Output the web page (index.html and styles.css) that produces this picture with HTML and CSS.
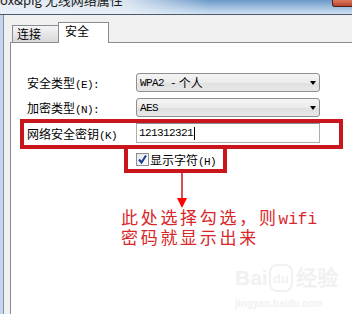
FILE: index.html
```html
<!DOCTYPE html>
<html lang="zh-CN">
<head>
    <meta charset="UTF-8">
    <meta name="viewport" content="width=device-width, initial-scale=1.0">
    <link rel="stylesheet" href="styles.css">
</head>
<body>
    <div class="window">
        <div class="titlebar">
            <span class="title">ox&amp;pig 无线网络属性</span>
            <span class="close"></span>
        </div>
        <div class="body">
            <div class="frame"></div>
            <div class="client">
                <div class="tabs">
                    <div class="tab">连接</div>
                    <div class="tab active">安全</div>
                </div>
                <div class="panel">
                    <div class="field">
                        <span class="label">安全类型<span class="en">(E):</span></span>
                        <div class="select"><span class="en">WPA2 - </span>&nbsp;个人<i class="drop"></i></div>
                    </div>
                    <div class="field">
                        <span class="label">加密类型<span class="en">(N):</span></span>
                        <div class="select"><span class="en">AES</span><i class="drop"></i></div>
                    </div>
                    <div class="field key">
                        <span class="label">网络安全密钥<span class="en">(K)</span></span>
                        <div class="input"><span class="en">121312321</span><i class="cursor"></i></div>
                    </div>
                    <div class="show">
                        <svg class="check" width="13" height="13" viewBox="0 0 13 13">
                            <defs>
                                <linearGradient id="box" x1="0" y1="0" x2="1" y2="1">
                                    <stop offset="0" stop-color="#dfe6ee"/>
                                    <stop offset="1" stop-color="#ffffff"/>
                                </linearGradient>
                            </defs>
                            <rect x="0.5" y="0.5" width="12" height="12" fill="url(#box)" stroke="#8e8f8f"/>
                            <path d="M3 6.5 L5.5 9.5 L10 2.5" fill="none" stroke="#1f3a8a" stroke-width="2"/>
                        </svg>
                        <span>显示字符<span class="en">(H)</span></span>
                    </div>
                    <svg class="arrow" width="12" height="35" viewBox="0 0 12 35">
                        <line x1="6" y1="0" x2="6" y2="27" stroke="#c8161c" stroke-width="1.5"/>
                        <polygon points="1,25 11,25 6,35" fill="#f00"/>
                    </svg>
                    <p class="note">此处选择勾选，则<span class="en">wifi</span><br>密码就显示出来</p>
                </div>
            </div>
        </div>
        <div class="watermark">
            <div class="brand">Bai<span class="paw">du</span>经验</div>
            <div class="site">jingyan.baidu.com</div>
        </div>
    </div>
</body>
</html>
```
FILE: styles.css
```css
* {
    box-sizing: border-box;
}

body {
    margin: 0;
    font: 12px "Noto Sans CJK SC", "Liberation Sans", sans-serif;
    color: #000;
}

.window {
    position: relative;
    width: 352px;
    height: 314px;
    overflow: hidden;
    background: #f0f0f0;
}

/* title bar, mostly cut off at the top */
.titlebar {
    display: flex;
    height: 15px;
    overflow: hidden;
    border-bottom: 1px solid #4d5a68;
    background:
        linear-gradient(to right, rgba(236, 241, 247, .95) 0, rgba(236, 241, 247, .85) 125px, rgba(236, 241, 247, 0) 210px),
        linear-gradient(#6b98c9, #cfe1f2);
}

.title {
    font-size: 13px;
    line-height: 13px;
    margin-top: -7px;
    color: #1e1e1e;
    white-space: nowrap;
}

.close {
    margin-left: auto;
    width: 20px;
    height: 7px;
    background: linear-gradient(#dc7a5c, #b8442c);
    border-left: 1px solid #4a2219;
    border-bottom: 1px solid #4a2219;
    border-bottom-left-radius: 3px;
}

.body {
    display: flex;
    height: 299px;
}

.frame {
    width: 4px;
    background: #c3d7ec;
    border-right: 1px solid #7f8fa0;
}

.client {
    flex: 1;
    display: flex;
    flex-direction: column;
    padding: 7px 0 0 6px;
}

.tabs {
    display: flex;
    align-items: flex-end;
    height: 20px;
    margin-left: 2px;
}

.tab {
    width: 46px;
    height: 17px;
    padding-left: 4px;
    line-height: 16px;
    border: 1px solid #898c95;
    border-bottom: 0;
    border-right: 0;
    background: linear-gradient(#f5f5f5, #d8d8d8);
}

.tab.active {
    position: relative;
    z-index: 1;
    width: 51px;
    height: 21px;
    margin-bottom: -1px;
    padding-left: 6px;
    background: #fff;
    border-right: 1px solid #898c95;
}

.panel {
    flex: 1;
    background: #fff;
    border-top: 1px solid #898c95;
    border-left: 1px solid #898c95;
    padding: 30px 0 0 9px;
}

.en {
    font-family: "Liberation Mono", monospace;
    font-size: 11px;
    letter-spacing: -0.6px;
}

.field {
    display: flex;
    align-items: center;
    width: 323px;
    height: 19px;
    padding-left: 7px;
    margin-bottom: 6px;
}

.label {
    width: 109px;
    flex: none;
}

.select {
    display: flex;
    align-items: center;
    width: 184px;
    height: 19px;
    padding-left: 3px;
    border: 1px solid #8e8f8f;
    border-radius: 3px;
    background: linear-gradient(#f4f4f4, #ebebeb 50%, #dfdfdf 51%, #e8e8e8);
}

.drop {
    margin-left: auto;
    margin-right: 3px;
    width: 0;
    height: 0;
    border-left: 3.5px solid transparent;
    border-right: 3.5px solid transparent;
    border-top: 4px solid #000;
}

/* red annotation boxes */
.key {
    height: 30px;
    margin-top: -4px;
    margin-bottom: 0;
    padding: 0 0 2px 3px;
    border: 4px solid #c9161c;
}

.input {
    display: flex;
    align-items: center;
    width: 184px;
    height: 20px;
    padding-left: 2px;
    border: 1px solid #abadb3;
    border-top-color: #8c909a;
}

.cursor {
    width: 1px;
    height: 13px;
    margin-left: 1px;
    background: #000;
}

.show {
    display: flex;
    align-items: center;
    gap: 1px;
    width: 103px;
    height: 28px;
    margin: -4px 0 0 104px;
    padding-left: 8px;
    border: 4px solid #c9161c;
}

.check {
    flex: none;
}

.arrow {
    display: block;
    margin-left: 156px;
}

.note {
    margin: 0 0 0 101px;
    font-size: 17px;
    line-height: 18px;
    letter-spacing: 2.7px;
    color: #d9262a;
}

.note .en {
    font-size: 16px;
    line-height: 16px;
    letter-spacing: 0;
}

/* faint site watermark */
.watermark {
    position: absolute;
    left: 235px;
    top: 264px;
    color: #f1f1f1;
    font-family: "Liberation Sans", sans-serif;
}

.brand {
    display: flex;
    align-items: center;
    font-size: 21px;
    font-weight: bold;
    line-height: 22px;
}

.brand .paw {
    font-size: 13px;
    margin: 0 3px 0 1px;
    padding: 2px 2px 0;
    border-radius: 8px;
    border: 2px solid #f1f1f1;
}

.site {
    margin-top: 6px;
    font-size: 10px;
    font-weight: bold;
}
```
